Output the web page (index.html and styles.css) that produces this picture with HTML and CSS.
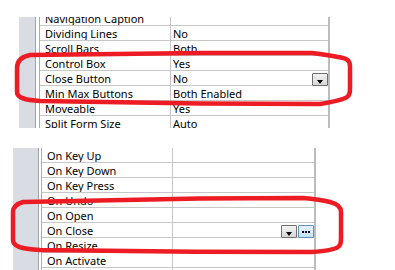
FILE: index.html
```html
<!DOCTYPE html>
<html lang="en">
<head>
  <meta charset="UTF-8">
  <title>Property Sheet</title>
  <link rel="stylesheet" href="styles.css">
</head>
<body>
  <!-- Format tab -->
  <div class="sheet sheet-top">
    <div class="gutter"></div>
    <div class="rules"></div>
    <div class="grid">
      <div class="row"><span class="name">Navigation Caption</span><span class="value"></span></div>
      <div class="row"><span class="name">Dividing Lines</span><span class="value">No</span></div>
      <div class="row"><span class="name">Scroll Bars</span><span class="value">Both</span></div>
      <div class="row"><span class="name">Control Box</span><span class="value">Yes</span></div>
      <div class="row"><span class="name">Close Button</span><span class="value">No<span class="btns"><span class="btn drop"></span></span></span></div>
      <div class="row"><span class="name">Min Max Buttons</span><span class="value">Both Enabled</span></div>
      <div class="row"><span class="name">Moveable</span><span class="value">Yes</span></div>
      <div class="row"><span class="name">Split Form Size</span><span class="value">Auto</span></div>
    </div>
  </div>

  <!-- Event tab -->
  <div class="sheet sheet-bottom">
    <div class="gutter"></div>
    <div class="rules"></div>
    <div class="grid">
      <div class="row"><span class="name">On Key Up</span><span class="value"></span></div>
      <div class="row"><span class="name">On Key Down</span><span class="value"></span></div>
      <div class="row"><span class="name">On Key Press</span><span class="value"></span></div>
      <div class="row"><span class="name">On Undo</span><span class="value"></span></div>
      <div class="row"><span class="name">On Open</span><span class="value"></span></div>
      <div class="row"><span class="name">On Close</span><span class="value"><span class="btns"><span class="btn drop"></span><span class="btn build"></span></span></span></div>
      <div class="row"><span class="name">On Resize</span><span class="value"></span></div>
      <div class="row"><span class="name">On Activate</span><span class="value"></span></div>
      <div class="row"><span class="name">On Deactivate</span><span class="value"></span></div>
    </div>
  </div>

  <!-- hand drawn marks -->
  <svg class="marks" width="395" height="270" viewBox="0 0 395 270">
    <path d="M312 53 L200 53 L30 55 C20 57 17 62 17 68 L17 92 C17 98 25 100 40 101 L200 103.5 L320 104 C332 102 343 100 347 97 C350 95 350 92 350 88 L350 66 C350 60 346 58 338 57 C328 55 320 54 312 53 Z" />
    <path d="M303 198 L200 198.5 L23 202 C16 204 13 207 13 212 L13 240 C13 246 20 249 40 250 L195 251.7 L312 252 C326 251 334 250 338 247 C341 245 341 242 341 238 L341 212 C341 207 338 204 330 202 C322 200 315 199 303 198 Z" />
  </svg>
</body>
</html>
```

FILE: styles.css
```css
/* Global */
* {
  margin: 0;
  padding: 0;
  box-sizing: border-box;
}

body {
  position: relative;
  width: 395px;
  height: 270px;
  overflow: hidden;
  background-color: #fff;
  color: #000;
  font-family: "Noto Sans", "Open Sans", sans-serif;
  font-size: 11px;
}

/* Property sheet panels */
.sheet {
  display: flex;
  overflow: hidden;
}

.sheet-top {
  margin: 17px 0 0 19px;
  width: 311px;
  height: 111px;
}

.sheet-bottom {
  margin: 20px 0 0 13px;
  width: 303px;
  height: 124px;
}

.gutter {
  width: 16px;
  background-color: #d9dde3;
}

.sheet-bottom .gutter {
  width: 25px;
}

.rules {
  width: 5px;
  border-left: 1px solid #9ea3aa;
  border-right: 1px solid #a9adb3;
}

.sheet-bottom .rules {
  width: 4px;
}

.grid {
  flex: 1;
  border-right: 2px solid #bcbcbc;
}

.sheet-top .grid {
  margin-top: -6px;
}

/* Rows */
.row {
  display: flex;
  height: 15px;
  border-bottom: 1px solid #c6c6c6;
  line-height: 14px;
  white-space: nowrap;
}

.name {
  width: 130px;
  padding: 1px 0 0 5px;
  overflow: hidden;
}

.value {
  flex: 1;
  display: flex;
  justify-content: space-between;
  border-left: 1px solid #c6c6c6;
  padding: 1px 0 0 2px;
}

.btns {
  display: flex;
  align-self: flex-end;
  gap: 1px;
  margin: 0 0 -1px auto;
}

.btn {
  display: flex;
  align-items: flex-end;
  justify-content: center;
  width: 16px;
  height: 13px;
  border-radius: 1px;
}

.drop {
  border: 1px solid #6f6f6f;
  background: linear-gradient(#f4f4f4, #d6d6d6);
  padding-bottom: 1px;
}

.drop::after {
  content: "";
  border-left: 3px solid transparent;
  border-right: 3px solid transparent;
  border-top: 4px solid #000;
}

.build {
  align-items: center;
  border: 1px solid #5e8fc4;
  background: linear-gradient(#e4f3fd, #c3e3f8);
}

.build::after {
  content: "";
  width: 2px;
  height: 2px;
  background: #000;
  box-shadow: 3px 0 0 #000, -3px 0 0 #000;
}

/* Red marker overlay */
.marks {
  position: absolute;
  top: 0;
  left: 0;
  pointer-events: none;
}

.marks path {
  fill: none;
  stroke: #ed1c24;
  stroke-width: 4.5;
  stroke-linejoin: round;
}
```
